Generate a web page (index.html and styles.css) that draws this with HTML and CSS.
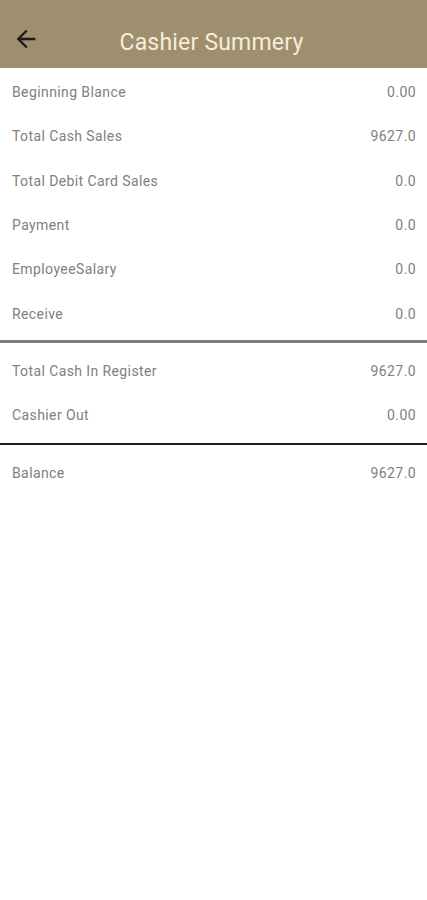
FILE: index.html
```html
<!DOCTYPE html>
<html lang="en">
<head>
<meta charset="utf-8">
<title>Cashier Summery</title>
<link rel="stylesheet" href="styles.css">
</head>
<body>
<header class="appbar">
  <button class="back" aria-label="Back">
    <svg viewBox="0 0 24 24" width="28" height="28"><path d="M20 11H7.83l5.59-5.59L12 4l-8 8 8 8 1.41-1.41L7.83 13H20v-2z" fill="#1b1a17"/></svg>
  </button>
  <h1 class="title">Cashier Summery</h1>
</header>
<main class="summary">
  <section class="group">
    <div class="row"><span>Beginning Blance</span><span>0.00</span></div>
    <div class="row"><span>Total Cash Sales</span><span>9627.0</span></div>
    <div class="row"><span>Total Debit Card Sales</span><span>0.0</span></div>
    <div class="row"><span>Payment</span><span>0.0</span></div>
    <div class="row"><span>EmployeeSalary</span><span>0.0</span></div>
    <div class="row"><span>Receive</span><span>0.0</span></div>
  </section>
  <hr class="divider gray">
  <section class="group">
    <div class="row"><span>Total Cash In Register</span><span>9627.0</span></div>
    <div class="row"><span>Cashier Out</span><span>0.00</span></div>
  </section>
  <hr class="divider dark">
  <section class="group">
    <div class="row"><span>Balance</span><span>9627.0</span></div>
  </section>
</main>
</body>
</html>
```
FILE: styles.css
```css
* { box-sizing: border-box; }
html, body { margin: 0; padding: 0; background: #ffffff; }
body { font-family: Roboto, "Noto Sans", sans-serif; }

.appbar {
  height: 68px;
  background: #a08f6f;
  display: flex;
  align-items: center;
  position: relative;
  padding-top: 10px;
}
.back {
  border: 0;
  background: transparent;
  padding: 0;
  margin-left: 12px;
  width: 28px;
  height: 28px;
  display: flex;
}
.title {
  flex: 1;
  margin: 0 44px 0 0;
  padding-top: 7px;
  text-align: center;
  font-weight: 400;
  font-size: 23px;
  color: #f4eedc;
  letter-spacing: 0.2px;
}

.summary { padding-top: 2px; }
.group { display: flex; flex-direction: column; }
.row {
  height: 44.3px;
  display: flex;
  align-items: center;
  justify-content: space-between;
  padding: 0 11px 0 12px;
  font-size: 14px;
  letter-spacing: 0.4px;
  color: #808080;
}
.divider {
  border: 0;
}
.divider.gray { height: 3px; background: #7d7d7d; margin: 4px 0 6px; }
.divider.dark { height: 2px; background: #1e1e1e; margin: 6px 0 5px; }
```
